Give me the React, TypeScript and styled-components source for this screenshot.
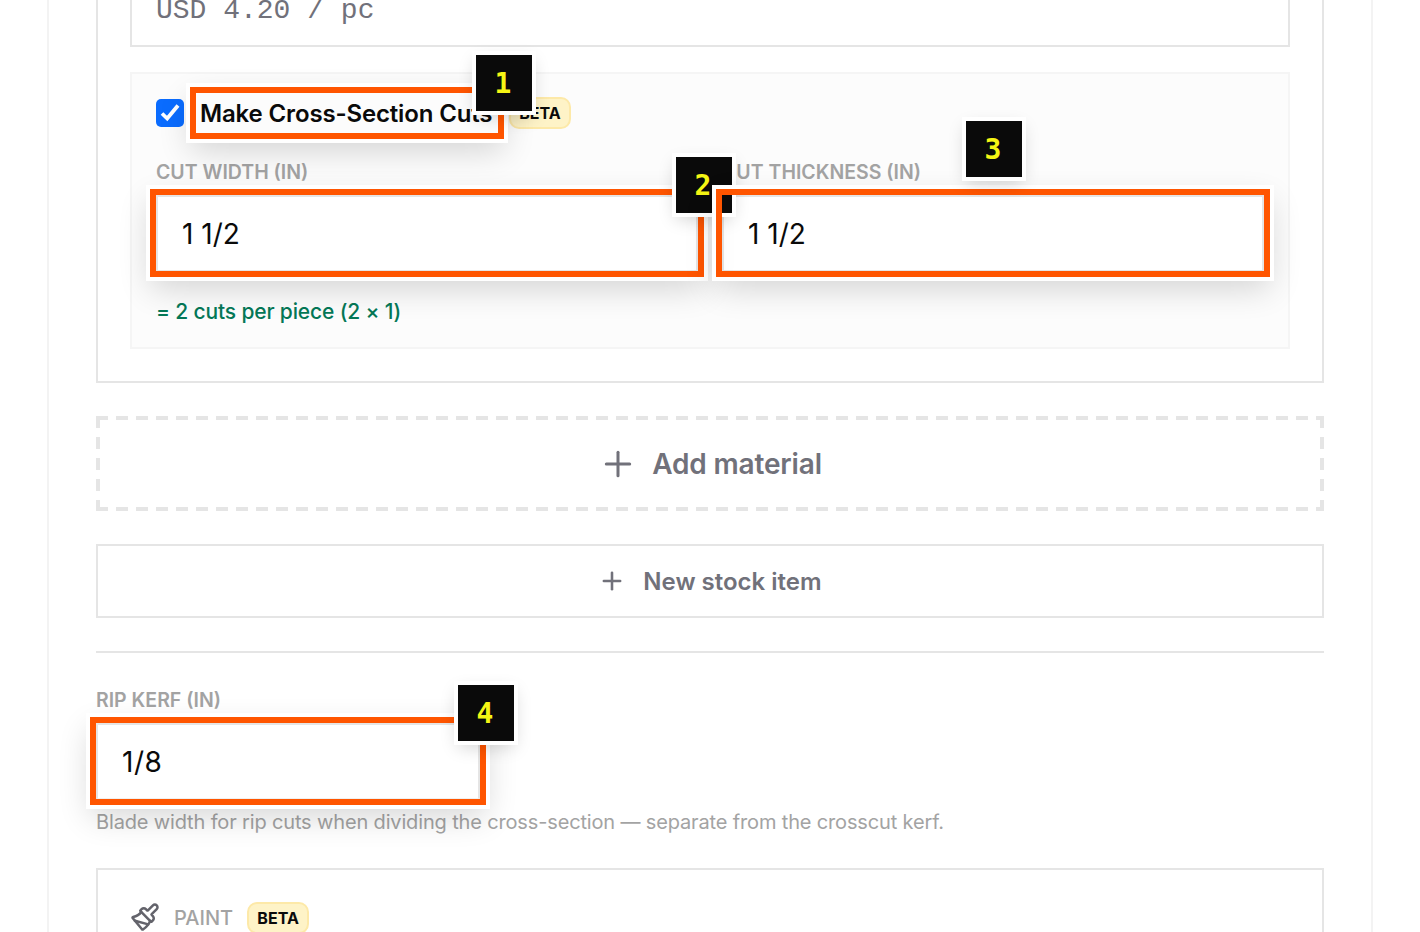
import React from 'react';
import styled, { createGlobalStyle } from 'styled-components';
import { Plus, Paintbrush } from 'lucide-react';

const GlobalStyle = createGlobalStyle`
  html, body {
    margin: 0;
    padding: 0;
    background: #ffffff;
    font-family: Inter, "Noto Sans", sans-serif;
  }
  * { box-sizing: border-box; }
`;

const rects = [
  { id: 'r1', x: 190, y: 87, w: 314, h: 52 },
  { id: 'r2', x: 150, y: 189, w: 554, h: 88 },
  { id: 'r3', x: 716, y: 189, w: 554, h: 88 },
  { id: 'r4', x: 90, y: 717, w: 396, h: 88 },
];

const badges = [
  { n: 1, x: 476, y: 55 },
  { n: 2, x: 676, y: 157 },
  { n: 3, x: 966, y: 121 },
  { n: 4, x: 458, y: 685 },
];

const App: React.FC = () => (
  <Page>
    <GlobalStyle />
    <Panel>
      <Card>
        <PriceInput readOnly value="USD 4.20 / pc" />
        <CrossSection>
          <CheckRow>
            <CheckBox>
              <svg width="28" height="28" viewBox="0 0 28 28" fill="none">
                <path d="M6 14.5l5.2 5L22 6.5" stroke="#fff" strokeWidth="3.8" />
              </svg>
            </CheckBox>
            <CheckLabel>Make Cross-Section Cuts</CheckLabel>
            <Beta>BETA</Beta>
          </CheckRow>
          <FieldGrid>
            <div>
              <FieldLabel>CUT WIDTH (IN)</FieldLabel>
              <TextInput readOnly value="1 1/2" />
            </div>
            <div>
              <FieldLabel>CUT THICKNESS (IN)</FieldLabel>
              <TextInput readOnly value="1 1/2" />
            </div>
          </FieldGrid>
          <CutsNote>= 2 cuts per piece (2 × 1)</CutsNote>
        </CrossSection>
      </Card>

      <AddMaterial>
        <Plus size={40} strokeWidth={1.8} />
        Add material
      </AddMaterial>

      <NewStock>
        <Plus size={28} strokeWidth={2.2} />
        New stock item
      </NewStock>

      <Divider />

      <KerfSection>
        <FieldLabel>RIP KERF (IN)</FieldLabel>
        <KerfInput readOnly value="1/8" />
        <KerfHint>Blade width for rip cuts when dividing the cross-section — separate from the crosscut kerf.</KerfHint>
      </KerfSection>

      <PaintCard>
        <Paintbrush size={30} strokeWidth={2} color="#63636b" />
        <PaintTitle>PAINT</PaintTitle>
        <Beta>BETA</Beta>
      </PaintCard>
    </Panel>

    <Highlight $x={rects[0].x} $y={rects[0].y} $w={rects[0].w} $h={rects[0].h} />
    <StepBadge $x={badges[0].x} $y={badges[0].y}>1</StepBadge>
    <Highlight $x={rects[1].x} $y={rects[1].y} $w={rects[1].w} $h={rects[1].h} />
    <StepBadge $x={badges[1].x} $y={badges[1].y}>2</StepBadge>
    <Highlight $x={rects[2].x} $y={rects[2].y} $w={rects[2].w} $h={rects[2].h} />
    <StepBadge $x={badges[2].x} $y={badges[2].y}>3</StepBadge>
    <Highlight $x={rects[3].x} $y={rects[3].y} $w={rects[3].w} $h={rects[3].h} />
    <StepBadge $x={badges[3].x} $y={badges[3].y}>4</StepBadge>
  </Page>
);

export default App;

const Page = styled.div`
  position: relative;
  width: 1420px;
  height: 932px;
  overflow: hidden;
  background: #ffffff;
`;

const Panel = styled.div`
  width: 1326px;
  margin: -109px 0 0 47px;
  padding: 48px 47px 0;
  border-left: 2px solid #f3f3f3;
  border-right: 2px solid #f3f3f3;
  display: flex;
  flex-direction: column;
`;

const Card = styled.div`
  border: 2px solid #e5e5e5;
  padding: 32px;
  display: flex;
  flex-direction: column;
  gap: 25px;
`;

const PriceInput = styled.input`
  display: block;
  width: 100%;
  height: 74px;
  padding: 0 24px;
  border: 2px solid #e5e5e5;
  background: #fff;
  outline: none;
  font-family: "Liberation Mono", monospace;
  font-size: 28px;
  color: #71717a;
`;

const CrossSection = styled.div`
  height: 277px;
  padding: 23px 24px 0;
  border: 2px solid #f5f5f5;
  background: #fcfcfc;
`;

const CheckRow = styled.div`
  display: flex;
  align-items: center;
  height: 32px;
`;

const CheckBox = styled.div`
  width: 28px;
  height: 28px;
  border-radius: 5px;
  background: #0a6cff;
  display: flex;
  align-items: center;
  justify-content: center;
`;

const CheckLabel = styled.span`
  margin-left: 16px;
  width: 309px;
  font-size: 24px;
  font-weight: 600;
  letter-spacing: -0.15px;
  white-space: nowrap;
  color: #0a0a0a;
`;

const Beta = styled.span`
  display: inline-flex;
  align-items: center;
  justify-content: center;
  width: 62px;
  height: 32px;
  border: 2px solid #fde9a8;
  border-radius: 10px;
  background: #fef3c7;
  font-size: 16px;
  font-weight: 700;
  color: #0a0a0a;
`;

const FieldGrid = styled.div`
  display: grid;
  grid-template-columns: 1fr 1fr;
  gap: 24px;
  margin-top: 31px;
`;

const FieldLabel = styled.div`
  height: 24px;
  margin-bottom: 11px;
  font-size: 19.5px;
  line-height: 24px;
  font-weight: 600;
  color: #a3a3a3;
`;

const TextInput = styled.input`
  display: block;
  width: 100%;
  height: 77px;
  padding: 0 24px;
  border: 2px solid #e5e5e5;
  background: #fff;
  outline: none;
  font-family: Inter, sans-serif;
  font-size: 28px;
  color: #0a0a0a;
`;

const CutsNote = styled.div`
  margin-top: 25px;
  font-size: 21px;
  line-height: 30px;
  font-weight: 500;
  letter-spacing: -0.15px;
  color: #047857;
`;

const AddMaterial = styled.button`
  margin-top: 33px;
  height: 95px;
  display: flex;
  align-items: center;
  justify-content: center;
  gap: 14px;
  border: none;
  background-color: #fff;
  background-image:
    repeating-linear-gradient(90deg, #e5e5e5 0 12px, transparent 12px 20px),
    repeating-linear-gradient(90deg, #e5e5e5 0 12px, transparent 12px 20px),
    repeating-linear-gradient(180deg, #e5e5e5 0 12px, transparent 12px 21px),
    repeating-linear-gradient(180deg, #e5e5e5 0 12px, transparent 12px 21px);
  background-repeat: no-repeat;
  background-size: 100% 4px, 100% 4px, 4px 100%, 4px 100%;
  background-position: top left, bottom left, top left, top right;
  font-family: Inter, sans-serif;
  font-size: 28px;
  font-weight: 600;
  letter-spacing: -0.15px;
  color: #71717a;
`;

const NewStock = styled.button`
  margin-top: 33px;
  height: 74px;
  display: flex;
  align-items: center;
  justify-content: center;
  gap: 17px;
  border: 2px solid #e5e5e5;
  background: #fff;
  font-family: Inter, sans-serif;
  font-size: 24px;
  font-weight: 600;
  color: #71717a;
`;

const Divider = styled.div`
  height: 2px;
  margin-top: 33px;
  background: #e5e5e5;
`;

const KerfSection = styled.div`
  margin-top: 35px;
`;

const KerfInput = styled(TextInput)`
  width: 384px;
  height: 77px;
  letter-spacing: 0.5px;
  border-bottom-color: #f0f0f0;
`;

const KerfHint = styled.div`
  margin-top: 8px;
  font-size: 20px;
  line-height: 28px;
  letter-spacing: -0.15px;
  color: #a3a3a3;
`;

const PaintCard = styled.div`
  margin-top: 32px;
  height: 120px;
  padding: 32px 32px 0;
  border: 2px solid #e5e5e5;
  display: flex;
  align-items: flex-start;
  gap: 14px;
`;

const PaintTitle = styled.span`
  font-size: 20px;
  line-height: 32px;
  font-weight: 500;
  color: #a3a3a3;
`;

const Highlight = styled.div<{ $x: number; $y: number; $w: number; $h: number }>`
  position: absolute;
  left: ${p => p.$x}px;
  top: ${p => p.$y}px;
  width: ${p => p.$w}px;
  height: ${p => p.$h}px;
  border: 6px solid #ff5500;
  box-shadow: 0 0 0 4px #ffffff, 0 12px 32px rgba(0, 0, 0, 0.16);
`;

const StepBadge = styled.div<{ $x: number; $y: number }>`
  position: absolute;
  left: ${p => p.$x}px;
  top: ${p => p.$y}px;
  width: 56px;
  height: 56px;
  padding-right: 2px;
  background: #0a0a0a;
  color: #f5f514;
  font-family: "DejaVu Sans Mono", monospace;
  font-size: 28px;
  font-weight: 700;
  display: flex;
  align-items: center;
  justify-content: center;
  box-shadow: 0 0 0 4px #ffffff, 0 6px 18px rgba(0, 0, 0, 0.18);
`;
